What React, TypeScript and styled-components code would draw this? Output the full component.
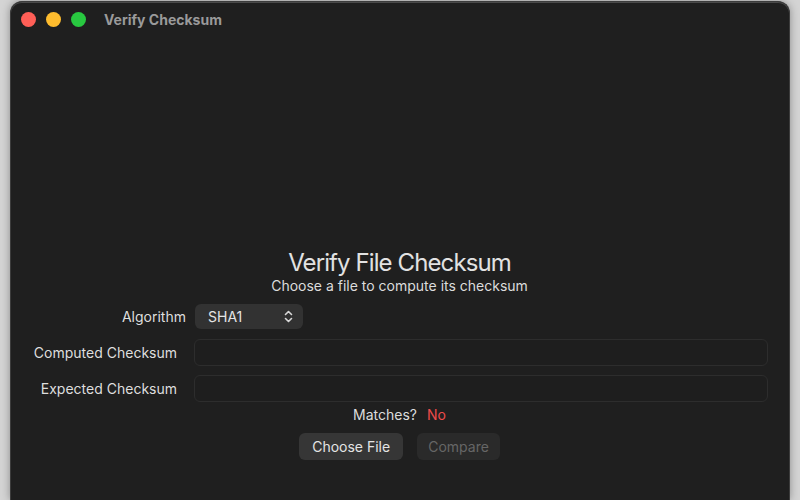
import React from "react";
import styled, { createGlobalStyle } from "styled-components";

const Global = createGlobalStyle`
  html, body { margin: 0; padding: 0; height: 100%; }
  body {
    background: #d4d4d4;
    font-family: "Inter", "Liberation Sans", sans-serif;
    overflow: hidden;
  }
  #root { height: 100%; }
`;

const Desktop = styled.div`
  height: 500px;
  padding: 0 10px;
  box-sizing: border-box;
  display: flex;
`;

const Window = styled.div`
  flex: 1;
  margin-top: 1px;
  background: #1f1f1f;
  border: 1px solid #3c3c3c;
  border-bottom: none;
  border-radius: 12px 12px 0 0;
  box-shadow: 0 0 8px rgba(0, 0, 0, 0.35), inset 0 1px 0 #4a4a4a;
  display: flex;
  flex-direction: column;
  box-sizing: border-box;
`;

const TitleBar = styled.div`
  height: 34px;
  display: flex;
  align-items: center;
  padding-left: 10px;
  gap: 10px;
`;

const Light = styled.span<{ $c: string }>`
  width: 15px;
  height: 15px;
  border-radius: 50%;
  background: ${(p) => p.$c};
`;

const WindowTitle = styled.span`
  margin-left: 8px;
  font-size: 14px;
  font-weight: 700;
  color: #9a9a9a;
`;

const Content = styled.div`
  display: flex;
  flex-direction: column;
  align-items: stretch;
  padding: 213px 21px 0 20px;
`;

const Heading = styled.h1`
  margin: 0;
  text-align: center;
  font-size: 24px;
  line-height: 28px;
  font-weight: 400;
  letter-spacing: -0.9px;
  color: #e2e2e2;
`;

const Sub = styled.p`
  margin: 0;
  text-align: center;
  font-size: 14px;
  line-height: 18px;
  color: #dcdcdc;
`;

const Form = styled.div`
  margin-top: 8px;
  display: grid;
  grid-template-columns: 146px 1fr;
  grid-template-rows: 27px 27px 27px;
  column-gap: 17px;
  row-gap: 9px;
  align-items: center;
`;

const Label = styled.label<{ $shift?: number }>`
  text-align: right;
  font-size: 14px;
  color: #dedede;
  margin-right: ${(p) => -(p.$shift ?? 0)}px;
`;

const Popup = styled.div`
  justify-self: start;
  margin-left: 1px;
  width: 108px;
  height: 25px;
  box-sizing: border-box;
  border-radius: 6px;
  background: #323232;
  display: flex;
  align-items: center;
  justify-content: space-between;
  padding: 0 10px 0 13px;
  font-size: 14px;
  color: #e4e4e4;
`;

const Field = styled.div`
  height: 27px;
  box-sizing: border-box;
  border: 1px solid #2d2d2d;
  border-radius: 6px;
  background: #1e1e1e;
`;

const MatchRow = styled.div`
  margin-top: 4px;
  display: flex;
  justify-content: center;
  gap: 10px;
  font-size: 14px;
  line-height: 18px;
  color: #dcdcdc;
`;

const No = styled.span`
  color: #ec4b4b;
`;

const Buttons = styled.div`
  margin-top: 9px;
  display: flex;
  justify-content: center;
  gap: 14px;
`;

const Button = styled.button<{ $disabled?: boolean }>`
  height: 27px;
  border: none;
  border-radius: 6px;
  padding: 0 ${(p) => (p.$disabled ? 11 : 13)}px;
  font-family: inherit;
  font-size: 14px;
  background: ${(p) => (p.$disabled ? "#2a2a2a" : "#363636")};
  color: ${(p) => (p.$disabled ? "#666666" : "#e4e4e4")};
`;

const Chevrons = () => (
  <svg width="9" height="13" viewBox="0 0 9 13" fill="none" stroke="#d8d8d8" strokeWidth="1.6" strokeLinecap="round" strokeLinejoin="round">
    <path d="M1.5 4.5 L4.5 1.5 L7.5 4.5" />
    <path d="M1.5 8.5 L4.5 11.5 L7.5 8.5" />
  </svg>
);

export default function App() {
  return (
    <>
      <Global />
      <Desktop>
        <Window>
          <TitleBar>
            <Light $c="#ff5f57" />
            <Light $c="#febc2e" />
            <Light $c="#28c840" />
            <WindowTitle>Verify Checksum</WindowTitle>
          </TitleBar>
          <Content>
            <Heading>Verify File Checksum</Heading>
            <Sub>Choose a file to compute its checksum</Sub>
            <Form>
              <Label $shift={9}>Algorithm</Label>
              <Popup>
                <span>SHA1</span>
                <Chevrons />
              </Popup>
              <Label>Computed Checksum</Label>
              <Field />
              <Label>Expected Checksum</Label>
              <Field />
            </Form>
            <MatchRow>
              <span>Matches?</span>
              <No>No</No>
            </MatchRow>
            <Buttons>
              <Button>Choose File</Button>
              <Button $disabled>Compare</Button>
            </Buttons>
          </Content>
        </Window>
      </Desktop>
    </>
  );
}
